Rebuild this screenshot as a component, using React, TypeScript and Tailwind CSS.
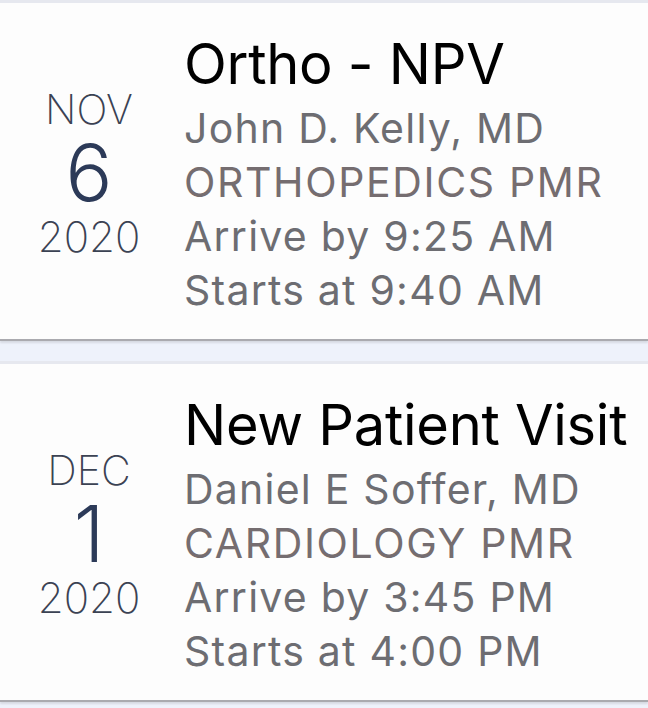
const visits = [
  {
    month: "NOV",
    day: "6",
    year: "2020",
    title: "Ortho - NPV",
    doctor: "John D. Kelly, MD",
    dept: "ORTHOPEDICS PMR",
    arrive: "Arrive by 9:25 AM",
    starts: "Starts at 9:40 AM",
  },
  {
    month: "DEC",
    day: "1",
    year: "2020",
    title: "New Patient Visit",
    doctor: "Daniel E Soffer, MD",
    dept: "CARDIOLOGY PMR",
    arrive: "Arrive by 3:45 PM",
    starts: "Starts at 4:00 PM",
  },
];

function VisitCard({ v }: { v: (typeof visits)[number] }) {
  return (
    <div className="flex items-start h-[339px] bg-[#fdfdfd] border-t-[3px] border-[#e6e8ef] shadow-[0_2px_0_#aaaaaf,0_4px_2px_rgba(0,0,0,0.10)]">
      {/* Date */}
      <div className="w-[178px] pt-[86px] flex flex-col items-center text-[#3b4253] font-extralight">
        <span className="text-[41px] leading-none">{v.month}</span>
        <span className="mt-[4px] text-[78px] leading-none font-light text-[#2c3a58]">{v.day}</span>
        <span className="mt-[4px] text-[42px] leading-none">{v.year}</span>
      </div>

      {/* Details */}
      <div className="ml-[6px] pt-[29px] flex flex-col">
        <span className="text-[56px] leading-[64px] text-black tracking-[-0.005em]">{v.title}</span>
        <div className="mt-[5px] flex flex-col text-[41px] leading-[54px] tracking-[0.03em] text-[#6d6d72]">
          <span>{v.doctor}</span>
          <span className="text-[#756d70] tracking-[0.04em]">{v.dept}</span>
          <span>{v.arrive}</span>
          <span>{v.starts}</span>
        </div>
      </div>
    </div>
  );
}

export default function App() {
  return (
    <div
      className="min-h-screen bg-[#eef2fb] flex flex-col gap-[22px]"
      style={{ fontFamily: "Inter, 'Noto Sans', sans-serif" }}
    >
      {visits.map((v) => (
        <VisitCard key={v.title} v={v} />
      ))}
    </div>
  );
}
